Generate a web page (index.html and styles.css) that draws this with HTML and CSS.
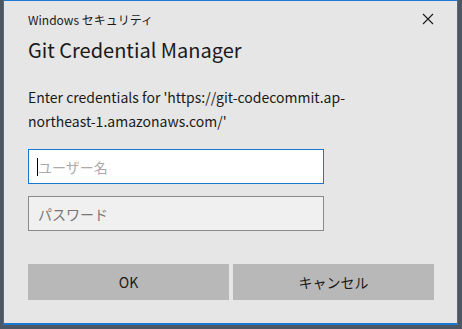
FILE: index.html
```html
<!DOCTYPE html>
<html>

<head>
  <meta charset="UTF-8">
  <meta name="viewport" content="width=device-width, initial-scale=1.0">
  <title>Windows セキュリティ</title>
  <link rel="stylesheet" href="styles.css">
</head>

<body>
  <div class="window">
    <div class="titlebar">
      <span class="caption">Windows セキュリティ</span>
      <svg class="close" width="12" height="12" viewBox="0 0 12 12">
        <path d="M1 1 L11 11 M11 1 L1 11" stroke="#1a1a1a" stroke-width="1.1" fill="none" />
      </svg>
    </div>
    <h1>Git Credential Manager</h1>
    <p class="message">Enter credentials for 'https://git-codecommit.ap-northeast-1.amazonaws.com/'</p>
    <div class="fields">
      <div class="field focus">
        <span class="caret"></span>
        <input id="user" type="text" placeholder="ユーザー名" />
      </div>
      <div class="field">
        <input id="pass" type="password" placeholder="パスワード" />
      </div>
    </div>
    <div class="actions">
      <button id="ok">OK</button>
      <button id="cancel">キャンセル</button>
    </div>
  </div>
</body>

</html>
```

FILE: styles.css
```css
* {
  padding: 0;
  margin: 0;
  box-sizing: border-box;
}

body {
  overflow: hidden;
  background: #4a5866;
  font-family: "Noto Sans CJK JP", "Noto Sans", sans-serif;
}

.window {
  width: 455px;
  height: 325px;
  margin-left: 3px;
  background: #e6e6e6;
  border: 1px solid #1a78d2;
  border-bottom-width: 2px;
  padding: 0 22px 0 24px;
}

.titlebar {
  height: 36px;
  display: flex;
  align-items: center;
  justify-content: space-between;
  padding-right: 1px;
}

.caption {
  font-size: 12px;
  color: #1a1a1a;
}

h1 {
  font-size: 20px;
  font-weight: normal;
  color: #1a1a1a;
  line-height: 26px;
}

.message {
  margin-top: 22px;
  font-size: 14px;
  line-height: 24px;
  color: #1a1a1a;
  width: 340px;
}

.fields {
  margin-top: 16px;
  display: flex;
  flex-direction: column;
  gap: 12px;
}

.field {
  position: relative;
  width: 296px;
  height: 35px;
}

.field input {
  width: 100%;
  height: 100%;
  border: 1px solid #8a8a8a;
  background: #f0f0f0;
  padding: 0 9px;
  font-family: inherit;
  font-size: 14px;
  outline: none;
  color: #1a1a1a;
}

.field input::placeholder {
  color: #777;
}

.field.focus input {
  border-color: #1a78d2;
  background: #fff;
}

.field.focus input::placeholder {
  color: #aaa;
}

.caret {
  position: absolute;
  left: 9px;
  top: 9px;
  width: 1px;
  height: 18px;
  background: #000;
}

.actions {
  margin-top: 33px;
  display: flex;
  gap: 4px;
}

.actions button {
  width: 201px;
  height: 36px;
  border: none;
  background: #b8b8b8;
  font-family: inherit;
  font-size: 14px;
  color: #1a1a1a;
}
```
